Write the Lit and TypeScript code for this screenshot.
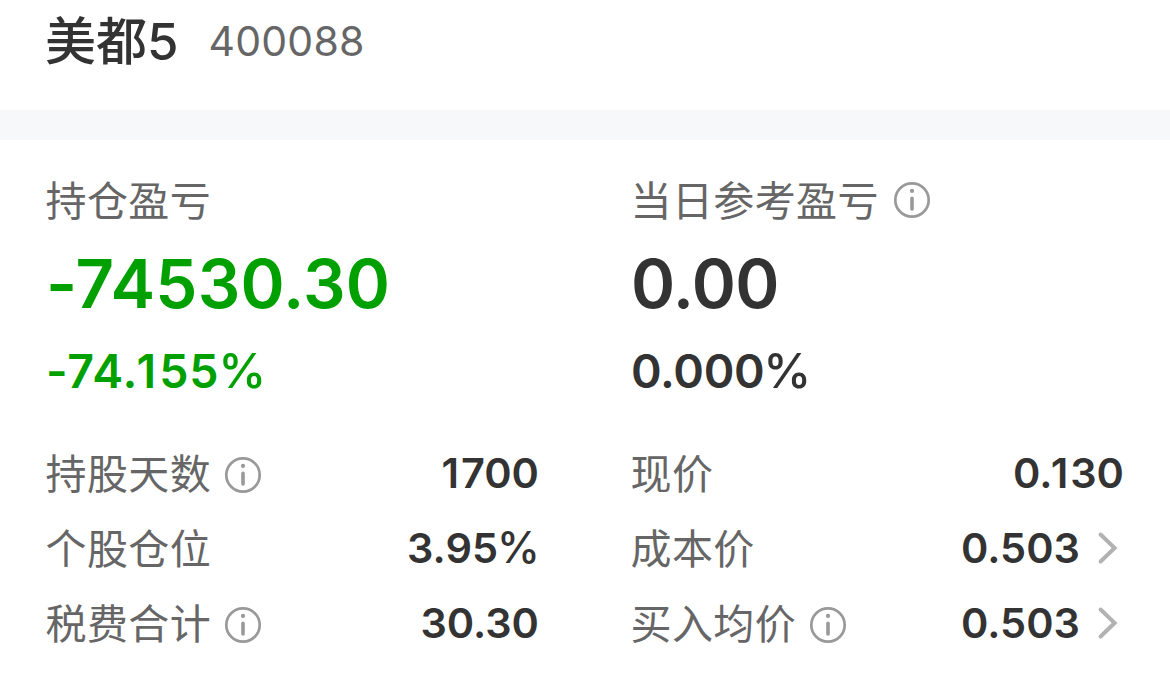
import { LitElement, html, css, svg, nothing } from "lit";
import { customElement, property } from "lit/decorators.js";

interface Metric {
  label: string;
  value: string;
  info?: boolean;
  link?: boolean;
}

const LEFT: Metric[] = [
  { label: "持股天数", value: "1700", info: true },
  { label: "个股仓位", value: "3.95%" },
  { label: "税费合计", value: "30.30", info: true },
];

const RIGHT: Metric[] = [
  { label: "现价", value: "0.130" },
  { label: "成本价", value: "0.503", link: true },
  { label: "买入均价", value: "0.503", info: true, link: true },
];

// The percent sign is set lighter than the digits, and a "1" is spaced
// on its own because the font's side bearings are uneven.
const figure = (value: string) =>
  value.split(/([1%])/).map((part) => {
    if (part === "%") return html`<span class="pct">%</span>`;
    if (part === "1") return html`<span class="one">1</span>`;
    return part;
  });

const figureStyles = css`
  .pct {
    margin: 0 -0.02em 0 -0.025em;
    font-size: 1.04em;
    font-weight: 500;
    line-height: 1;
  }

  .one {
    margin: 0 0.045em 0 -0.04em;
  }
`;

@customElement("info-icon")
export class InfoIcon extends LitElement {
  static styles = css`
    :host {
      display: block;
      width: 38px;
      height: 38px;
    }

    svg {
      display: block;
    }
  `;

  render() {
    return svg`
      <svg width="38" height="38" viewBox="0 0 38 38" fill="none" stroke="#999">
        <circle cx="19" cy="19" r="16.7" stroke-width="2.7" />
        <path d="M19 17.4v10.6" stroke-width="3.6" stroke-linecap="round" />
        <circle cx="19" cy="9.9" r="2.1" fill="#999" stroke="none" />
      </svg>
    `;
  }
}

@customElement("metric-row")
export class MetricRow extends LitElement {
  static styles = [
    figureStyles,
    css`
      :host {
        display: flex;
        align-items: center;
        height: 75px;
      }

      .label {
        margin: 0 0 0 -0.5px;
        color: #666;
        font-size: 41px;
        letter-spacing: 0.4px;
        line-height: 60px;
      }

      info-icon {
        margin: 2px 0 0 12.9px;
      }

      .value {
        margin: -2px 0 0 auto;
        color: #333;
        font-size: 41.5px;
        font-weight: 600;
        line-height: 60px;
      }

      .chevron {
        display: block;
        margin: -1px 5px 0 17px;
      }
    `,
  ];

  @property({ attribute: false }) metric!: Metric;

  render() {
    const { label, value, info, link } = this.metric;
    return html`
      <span class="label">${label}</span>
      ${info ? html`<info-icon></info-icon>` : nothing}
      <span class="value">${figure(value)}</span>
      ${link
        ? html`<svg class="chevron" width="22" height="34" viewBox="0 0 22 34" fill="none">
            <path
              d="M3.6 3.5L17.6 17L3.6 30.5"
              stroke="#b2b2b2"
              stroke-width="4"
              stroke-linecap="round"
            />
          </svg>`
        : nothing}
    `;
  }
}

@customElement("app-root")
export class AppRoot extends LitElement {
  static styles = [
    figureStyles,
    css`
      :host {
        display: block;
        height: 681px;
        overflow: hidden;
        background: #fff;
        color: #333;
        font-family: Inter, "Noto Sans CJK SC", sans-serif;
        white-space: nowrap;
      }

      .header {
        box-sizing: border-box;
        height: 110px;
        padding: 9px 45px 0;
        display: flex;
        gap: 30px;
      }

      .name {
        font-size: 51px;
        font-weight: 500;
        line-height: 66px;
      }

      .code {
        color: #666;
        font-size: 41px;
        letter-spacing: 0.2px;
        line-height: 65px;
      }

      .divider {
        height: 30px;
        background: #f7f8fa;
      }

      .columns {
        display: grid;
        grid-template-columns: 493px 493px;
        column-gap: 92px;
        padding: 30px 46px 0;
      }

      .title {
        display: flex;
        align-items: center;
        height: 60px;
        color: #666;
        font-size: 41px;
        letter-spacing: 0.4px;
      }

      .title span {
        margin: -4px 0 0 -0.5px;
      }

      .title info-icon {
        margin-left: 14px;
      }

      .amount {
        height: 106px;
        font-size: 67px;
        font-weight: 600;
        letter-spacing: -0.6px;
        line-height: 108px;
      }

      .percent {
        height: 70px;
        margin-bottom: 30px;
        font-size: 46.5px;
        font-weight: 600;
        letter-spacing: -0.3px;
        line-height: 70px;
      }

      .loss {
        color: #00a000;
      }

      .amount.loss {
        letter-spacing: 0.2px;
      }

      .percent.loss {
        letter-spacing: 0.9px;
      }
    `,
  ];

  render() {
    return html`
      <div class="header">
        <span class="name">美都5</span>
        <span class="code">400088</span>
      </div>
      <div class="divider"></div>
      <div class="columns">
        <section>
          <div class="title"><span>持仓盈亏</span></div>
          <div class="amount loss">-74530.30</div>
          <div class="percent loss">${figure("-74.155%")}</div>
          ${LEFT.map((m) => html`<metric-row .metric=${m}></metric-row>`)}
        </section>
        <section>
          <div class="title"><span>当日参考盈亏</span><info-icon></info-icon></div>
          <div class="amount">0.00</div>
          <div class="percent">${figure("0.000%")}</div>
          ${RIGHT.map((m) => html`<metric-row .metric=${m}></metric-row>`)}
        </section>
      </div>
    `;
  }
}

declare global {
  interface HTMLElementTagNameMap {
    "app-root": AppRoot;
    "metric-row": MetricRow;
    "info-icon": InfoIcon;
  }
}
